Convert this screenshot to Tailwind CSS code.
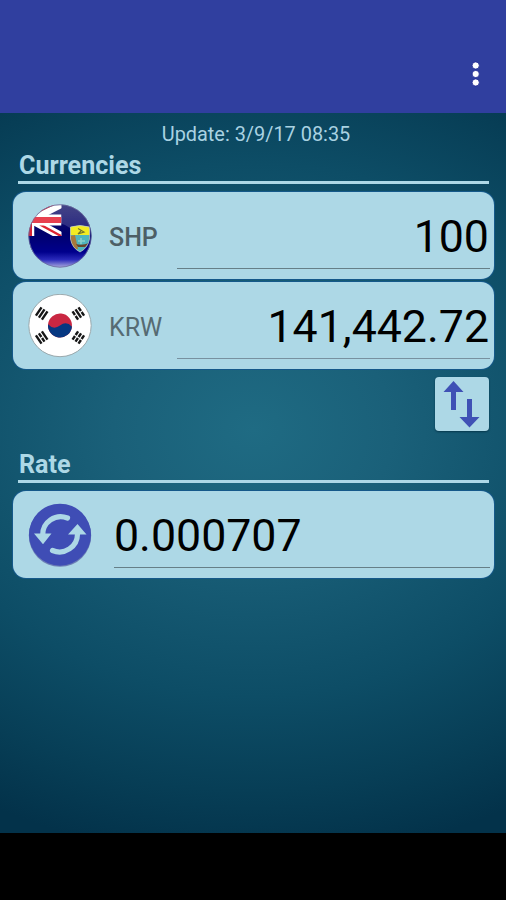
<!DOCTYPE html>
<html lang="en">
<head>
<meta charset="utf-8">
<title>Currency converter</title>
<script src="https://cdn.jsdelivr.net/npm/@tailwindcss/browser@4"></script>
</head>
<body class="w-[506px] h-[900px] overflow-hidden bg-black flex flex-col font-[Roboto,sans-serif]">
<header class="h-[113px] shrink-0 bg-[#303f9f] flex items-end justify-end">
  <button class="w-[60px] h-[79px] flex flex-col items-center justify-center" aria-label="Menu">
    <svg width="12" height="28" viewBox="0 0 12 28" fill="#fff" stroke="#1c2590" stroke-width=".8"><circle cx="5.700" cy="5.500" r="3.600"/><circle cx="5.700" cy="14" r="3.600"/><circle cx="5.700" cy="22.500" r="3.600"/></svg>
  </button>
</header>
<main class="h-[720px] shrink-0 pl-[13px] pr-[12px] flex flex-col bg-[radial-gradient(ellipse_540px_430px_at_50%_44%,#1f6b83_0%,#1a6079_26%,#0d4d66_62%,#073e56_84%,#03324a_100%)]">
  <p class="h-[42px] pl-[5px] pt-[1px] text-center text-[19.900px] leading-[42px] text-[#a9d2e2]">Update: 3/9/17 08:35</p>
  <section>
    <h2 class="mx-[5px] h-[29px] pl-[1px] border-b-[3px] border-[#add8e6] text-[25.100px] leading-[21px] font-bold text-[#add8e6]">Currencies</h2>
    <div class="mt-[8px] h-[87px] rounded-[13px] bg-[#add8e6] shadow-[0_0_0_1px_#15598a] flex items-start pl-[15px] pr-[4px]">
      <svg class="mt-[12px] shrink-0" width="64" height="64" viewBox="0 0 64 64">
        <defs>
          <clipPath id="disc"><circle cx="32" cy="32" r="31.500"/></clipPath>
          <clipPath id="jack"><path d="M0 0H33.500V32H0z"/></clipPath>
          <clipPath id="shield"><path d="M42.500 23Q52 20 61.500 23V35Q60 44 52 48Q44 44 42.500 35z"/></clipPath>
          <linearGradient id="navy" x2="0" y2="1"><stop offset="0" stop-color="#1c1c6c"/><stop offset=".45" stop-color="#00006b"/><stop offset=".75" stop-color="#00008c"/><stop offset=".87" stop-color="#2a2abb"/><stop offset="1" stop-color="#b5b5e0"/></linearGradient>
          <linearGradient id="gloss" x2="0" y2="1"><stop offset="0" stop-color="#fff" stop-opacity=".18"/><stop offset="1" stop-color="#fff" stop-opacity=".15"/></linearGradient>
        </defs>
        <g clip-path="url(#disc)">
          <path fill="url(#navy)" d="M0 0h64v64H0z"/>
          <path d="M0 0H64V25Q50 30 37 21Q28 17 0 20z" fill="url(#gloss)"/>
          <g clip-path="url(#jack)">
            <path d="M2 16L35 -1M2 15L35 33" stroke="#fff" stroke-width="8"/>
            <path d="M3 11L26 0M12 20.500L34 32.500" stroke="#dc2432" stroke-width="2.400"/>
            <path d="M0 16H33.500" stroke="#fff" stroke-width="11"/>
            <path d="M3 12V32" stroke="#fff" stroke-width="6.500"/>
            <path d="M0 16H33.500" stroke="#e8404f" stroke-width="6.200"/>
            <path d="M2 13V32" stroke="#d52335" stroke-width="4"/>
          </g>
          <g clip-path="url(#shield)">
            <path fill="#4fb6bd" d="M42 20h21v30H42z"/>
            <path fill="#f2ec22" d="M42 20h21v11H42z"/>
            <path fill="#a8793c" d="M42 32L47 31L50 45L45 46z"/>
            <path fill="#69452c" d="M48 40Q54 42 61 39L57 43H50z"/>
            <path d="M53 34V40M50 37H57" stroke="#8ed0cc" stroke-width="1.500"/>
            <path d="M50 24.500L56 28L50 30L53 27" fill="none" stroke="#72752c" stroke-width="1.200"/>
          </g>
          <path d="M42.500 23Q52 20 61.500 23V35Q60 44 52 48Q44 44 42.500 35z" fill="none" stroke="#c9ccc8" stroke-width=".7"/>
        </g>
        <circle cx="32" cy="32" r="31.200" fill="none" stroke="#686c9c" stroke-width=".8"/>
      </svg>
      <span class="w-[68px] ml-[17px] mt-[31px] text-[25px] leading-[30px] font-medium text-[#4d5f66]">SHP</span>
      <div class="flex-1 h-[77px] pr-[1px] border-b border-[#667f88] text-right text-[44.700px] leading-[90px] text-black">100</div>
    </div>
    <div class="mt-[3px] h-[87px] rounded-[13px] bg-[#add8e6] shadow-[0_0_0_1px_#15598a] flex items-start pl-[15px] pr-[4px]">
      <svg class="mt-[12px] shrink-0" width="64" height="64" viewBox="0 0 64 64">
        <circle cx="32" cy="31.500" r="31.200" fill="#fff" stroke="#9ba9ad"/>
        <g transform="rotate(6 32 31.500)">
          <circle cx="32" cy="31.500" r="12" fill="#c92742"/>
          <path fill="#063781" d="M20 31.500Q26 37 32 31.500T44 31.500a12 12 0 0 1-24 0z"/>
        </g>
        <g stroke="#161616" stroke-width="2.400" fill="none">
          <path transform="translate(13.700 19.500) rotate(-56)" d="M-5 -3.600H5M-5 0H5M-5 3.600H5"/>
          <path transform="translate(50.300 19.500) rotate(56)" d="M-5 -3.600H-.6M.6 -3.600H5M-5 0H5M-5 3.600H-.6M.6 3.600H5"/>
          <path transform="translate(13.700 43.500) rotate(56)" d="M-5 -3.600H5M-5 0H-.6M.6 0H5M-5 3.600H5"/>
          <path transform="translate(50.300 43.500) rotate(-56)" d="M-5 -3.600H-.6M.6 -3.600H5M-5 0H-.6M.6 0H5M-5 3.600H-.6M.6 3.600H5"/>
        </g>
      </svg>
      <span class="w-[68px] ml-[17px] mt-[31px] text-[25px] leading-[30px] text-[#566b73]">KRW</span>
      <div class="flex-1 h-[77px] pr-[1px] border-b border-[#7891a0] text-right text-[44.700px] leading-[90px] text-black">141,442.72</div>
    </div>
  </section>
  <button class="self-end mr-[5px] mt-[8px] w-[54px] h-[54px] rounded-[4px] bg-[#add8e6] shadow-[0_1px_2px_#06384d]" aria-label="Swap">
    <svg width="54" height="54" viewBox="0 0 54 54" fill="#3f51b5"><path d="M18.500 4L28.500 15H21V33H16V15H8.500z"/><path d="M34.500 50.500L44.500 40H37V22H32V40H24.500z"/></svg>
  </button>
  <section class="mt-[22px]">
    <h2 class="mx-[5px] h-[30px] pl-[1px] border-b-[3px] border-[#add8e6] text-[25.100px] leading-[23px] font-bold text-[#add8e6]">Rate</h2>
    <div class="mt-[8px] h-[87px] rounded-[13px] bg-[#add8e6] shadow-[0_0_0_1px_#15598a] flex items-start pl-[15px] pr-[4px]">
      <svg class="mt-[12px] shrink-0" width="64" height="64" viewBox="0 0 64 64">
        <circle cx="32" cy="32.600" r="31.200" fill="#6c7eb5"/><circle cx="32" cy="31.700" r="31" fill="#3f4db5"/>
        <g fill="none" stroke="#add8e6" stroke-width="5.200" stroke-linecap="round"><path d="M39.500 15A18 18 0 0 0 14.700 32"/><path d="M24.500 47.500A18 18 0 0 0 49.500 31"/></g>
        <path fill="#add8e6" d="M6 30.500H23.500L15 41.300zM40 31.500H58.500L49.500 21z"/>
      </svg>
      <div class="flex-1 ml-[22px] h-[77px] border-b border-[#667f88] text-[44.700px] leading-[90px] text-black">0.000707</div>
    </div>
  </section>
</main>
<footer class="flex-1 bg-black"></footer>
</body>
</html>
